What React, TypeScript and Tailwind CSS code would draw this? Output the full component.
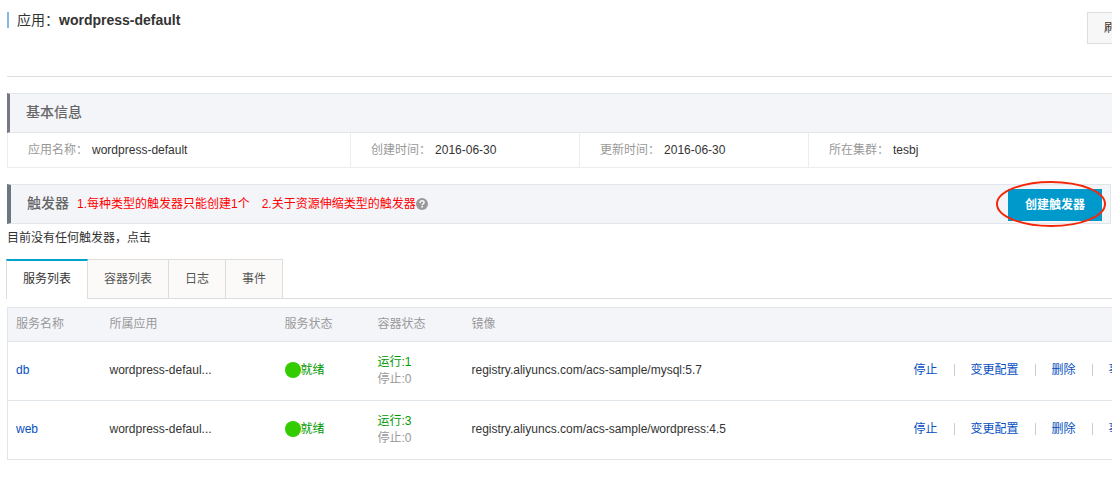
import React from 'react';

const services = [
  { name: 'db', app: 'wordpress-defaul...', running: 1, stopped: 0, image: 'registry.aliyuncs.com/acs-sample/mysql:5.7' },
  { name: 'web', app: 'wordpress-defaul...', running: 3, stopped: 0, image: 'registry.aliyuncs.com/acs-sample/wordpress:4.5' },
];

const tabs = ['服务列表', '容器列表', '日志', '事件'];

function InfoCell({ label, value }: { label: string; value: string }) {
  return (
    <div className="flex w-[229px] items-center gap-1 border-r border-[#ebedf0] px-5 first:w-[343px] last:border-r-0">
      <dt className="text-[#999]">{label}：</dt>
      <dd>{value}</dd>
    </div>
  );
}

function Separator() {
  return <span className="mx-4 h-3 w-px shrink-0 bg-[#ccc]" />;
}

function HelpIcon() {
  return (
    <svg className="size-3" viewBox="0 0 12 12" aria-hidden="true">
      <circle cx="6" cy="6" r="6" fill="#999" />
      <path d="M4 4.9C4 3.5 4.9 2.8 6.1 2.8s2 .7 2 1.7c0 1.4-1.9 1.4-1.9 2.7" fill="none" stroke="#f4f5f9" strokeWidth="1.6" />
      <rect x="5.3" y="8" width="1.7" height="1.6" fill="#f4f5f9" />
    </svg>
  );
}

export default function App() {
  return (
    <div className="overflow-hidden bg-white pb-10 pl-[7px] font-['Liberation_Sans','Noto_Sans_CJK_SC',sans-serif] text-xs text-[#333]">
      <div className="-mr-[33px]">
        {/* 标题 */}
        <header className="flex h-[77px] items-start justify-between border-b border-[#ddd] pt-3">
          <h1 className="flex h-4 items-center border-l-2 border-[#88b7e0] pl-2 text-sm">
            应用：<strong>wordpress-default</strong>
          </h1>
          <button className="h-8 border border-[#ddd] bg-[#f7f7f7] px-4">刷新</button>
        </header>

        {/* 基本信息 */}
        <section className="mt-4">
          <h2 className="flex h-10 items-center border-y border-l-[3px] border-y-[#e1e6eb] border-l-[#778] bg-[#f4f5f9] pb-0.5 pl-4 text-sm font-medium text-[#666]">
            基本信息
          </h2>
          <dl className="flex h-[35px] border-b border-l border-[#ebedf0]">
            <InfoCell label="应用名称" value="wordpress-default" />
            <InfoCell label="创建时间" value="2016-06-30" />
            <InfoCell label="更新时间" value="2016-06-30" />
            <InfoCell label="所在集群" value="tesbj" />
          </dl>
        </section>
      </div>

      {/* 触发器 */}
      <section className="mt-4 mr-px">
        <div className="flex h-10 items-center border-y border-r border-l-4 border-[#e1e6eb] border-l-[#6d7781] bg-[#f4f5f9] pr-2 pl-4">
          <h2 className="mr-2 pb-0.5 text-sm font-medium text-[#666]">触发器</h2>
          <p className="flex items-center text-[#f00]">
            <span className="mr-3">1.每种类型的触发器只能创建1个</span>
            <span>2.关于资源伸缩类型的触发器</span>
            <HelpIcon />
          </p>
          <div className="relative ml-auto pt-0.5">
            <button className="block h-8 bg-[#0099cc] px-[17px] font-bold text-white">创建触发器</button>
            <svg className="pointer-events-none absolute -top-1.5 -left-3 h-[46px] w-[110px]" viewBox="0 0 110 46" aria-hidden="true">
              <ellipse cx="55" cy="23" rx="54" ry="22" fill="none" stroke="#f5270b" strokeWidth="2" />
            </svg>
          </div>
        </div>
        <p className="flex h-[27px] items-center">目前没有任何触发器，点击</p>
      </section>

      {/* 服务列表 */}
      <div className="-mr-[33px] mt-2">
        <nav className="flex h-10 border-b border-[#ddd]" role="tablist">
          {tabs.map((tab, i) => (
            <button
              key={tab}
              role="tab"
              aria-selected={i === 0}
              className={
                i === 0
                  ? '-mb-px -ml-px border-x border-t-2 border-x-[#ddd] border-t-[#00a2ca] bg-white px-4 pb-0.5'
                  : 'border-t border-r border-[#ddd] bg-[#fbfaf8] px-4 text-[#555]'
              }
            >
              {tab}
            </button>
          ))}
        </nav>

        <table className="mt-2 w-full table-fixed border border-[#e1e6eb] text-left">
          <colgroup>
            <col className="w-[94px]" />
            <col className="w-[175px]" />
            <col className="w-[93px]" />
            <col className="w-[94px]" />
            <col />
            <col className="w-[231px]" />
          </colgroup>
          <thead>
            <tr className="h-[34px] bg-[#f4f5f9] text-[#999]">
              <th className="px-2 pb-0.5 font-normal">服务名称</th>
              <th className="px-2 pb-0.5 font-normal">所属应用</th>
              <th className="px-2 pb-0.5 font-normal">服务状态</th>
              <th className="px-2 pb-0.5 font-normal">容器状态</th>
              <th className="px-2 pb-0.5 font-normal">镜像</th>
              <th />
            </tr>
          </thead>
          <tbody>
            {services.map((service) => (
              <tr key={service.name} className="h-[59px] border-t border-[#e1e6eb]">
                <td className="px-2 pb-0.5">
                  <a href="#" className="text-[#0650c2]">{service.name}</a>
                </td>
                <td className="px-2 pb-0.5">{service.app}</td>
                <td className="px-2 pb-0.5">
                  <span className="flex items-center text-[#090]">
                    <span className="size-4 rounded-full bg-[#3c0]" />
                    就绪
                  </span>
                </td>
                <td className="px-2 leading-[17px]">
                  <div className="text-[#090]">运行:{service.running}</div>
                  <div className="text-[#999]">停止:{service.stopped}</div>
                </td>
                <td className="px-2 pb-0.5">{service.image}</td>
                <td className="pb-0.5">
                  <div className="flex items-center whitespace-nowrap text-[#0650c2]">
                    <a href="#">停止</a>
                    <Separator />
                    <a href="#">变更配置</a>
                    <Separator />
                    <a href="#">删除</a>
                    <Separator />
                    <a href="#">事件</a>
                  </div>
                </td>
              </tr>
            ))}
          </tbody>
        </table>
      </div>
    </div>
  );
}
